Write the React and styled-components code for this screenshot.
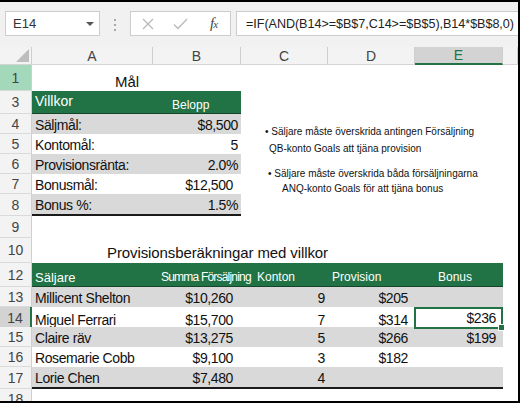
import React from 'react';
import styled, { createGlobalStyle } from 'styled-components';

const GREEN = '#217346';
const BAND = '#d9d9d9';
const COLS = '32px 121px 88px 87px 87px 88px 1fr';

const Global = createGlobalStyle`
  html, body { margin: 0; padding: 0; background: #fff; }
  body { font-family: "Liberation Sans", Arial, sans-serif; }
`;

const Frame = styled.div`
  width: 520px;
  height: 403px;
  box-sizing: border-box;
  border-top: 2px solid #000;
  border-right: 2px solid #000;
  border-bottom: 2px solid #000;
  background: #fff;
  overflow: hidden;
  display: flex;
  flex-direction: column;
`;

const FormulaBar = styled.div`
  height: 45px;
  flex: none;
  background: #f1f1f1;
  display: flex;
  align-items: flex-start;
  padding: 9px 0 0 5px;
  box-sizing: border-box;
`;

const NameBox = styled.div`
  width: 95px;
  height: 25px;
  flex: none;
  box-sizing: border-box;
  border: 1px solid #cdcdcd;
  background: #fff;
  display: flex;
  align-items: center;
  justify-content: space-between;
  padding: 0 5px 0 7px;
  font-size: 13px;
  color: #333;
`;

const Caret = styled.span`
  width: 0;
  height: 0;
  border-left: 4px solid transparent;
  border-right: 4px solid transparent;
  border-top: 4px solid #555;
`;

const Grip = styled.div`
  width: 2px;
  margin: 8px 14px 0 14px;
  display: flex;
  flex-direction: column;
  gap: 3px;
  & > i {
    display: block;
    width: 2px;
    height: 2px;
    background: #a8a8a8;
  }
`;

const ButtonBox = styled.div`
  width: 101px;
  height: 25px;
  flex: none;
  box-sizing: border-box;
  border: 1px solid #cdcdcd;
  background: #fff;
  display: flex;
  align-items: center;
`;

const ToolButton = styled.span`
  width: 34px;
  height: 23px;
  display: flex;
  align-items: center;
  justify-content: center;
  color: ${p => (p.$dim ? '#b8b8b8' : '#444')};
`;

const Fx = styled.span`
  font-family: "Liberation Serif", "Times New Roman", serif;
  font-style: italic;
  font-size: 15px;
  color: #444;
  letter-spacing: -1px;
  & > small {
    font-size: 11px;
  }
`;

const FormulaInput = styled.div`
  flex: 1;
  margin-left: 5px;
  margin-right: -10px;
  height: 25px;
  box-sizing: border-box;
  border: 1px solid #cdcdcd;
  background: #fff;
  display: flex;
  align-items: center;
  padding-left: 9px;
  font-size: 12.6px;
  letter-spacing: -0.05px;
  color: #222;
  white-space: nowrap;
  overflow: hidden;
`;

const Sheet = styled.div`
  position: relative;
  flex: 1;
  overflow: hidden;
`;

const HeaderRow = styled.div`
  display: grid;
  grid-template-columns: ${COLS};
  height: 18px;
  background: #f3f3f3;
`;

const Corner = styled.div`
  position: relative;
  box-sizing: border-box;
  border-right: 1px solid #cfcfcf;
  border-bottom: 1px solid #d4d4d4;
  display: flex;
  align-items: flex-end;
  justify-content: flex-end;
  padding: 0 2px 2px 0;
`;

const CornerMark = styled.span`
  width: 0;
  height: 0;
  border-left: 13px solid transparent;
  border-bottom: 13px solid #bdbdbd;
`;

const ColHead = styled.div`
  box-sizing: border-box;
  display: flex;
  align-items: center;
  justify-content: center;
  font-size: 14px;
  color: ${p => (p.$active ? GREEN : '#444')};
  background: ${p => (p.$active ? '#d3d3d3' : 'transparent')};
  border-right: 1px solid #cfcfcf;
  border-bottom: ${p => (p.$active ? `2px solid ${GREEN}` : '1px solid #d4d4d4')};
`;

const Row = styled.div`
  display: grid;
  grid-template-columns: ${COLS};
  height: ${p => p.$h}px;
`;

const RowHead = styled.div`
  box-sizing: border-box;
  display: flex;
  align-items: center;
  justify-content: center;
  font-size: 14px;
  color: #444;
  background: ${p => (p.$state === 'mark' ? '#a3d8bb' : p.$state === 'sel' ? '#d3d3d3' : '#f3f3f3')};
  border-bottom: 1px solid #dadada;
  border-right: ${p => (p.$state === 'sel' ? `2px solid ${GREEN}` : '1px solid #cfcfcf')};
`;

const Cell = styled.div`
  box-sizing: border-box;
  min-width: 0;
  display: flex;
  align-items: flex-end;
  justify-content: ${p => (p.$right ? 'flex-end' : 'flex-start')};
  grid-column: span ${p => p.$span || 1};
  white-space: nowrap;
  font-size: 14px;
  letter-spacing: -0.4px;
  line-height: 18px;
  color: #111;
  background: ${p => (p.$band ? BAND : 'transparent')};
  padding: 0 ${p => p.$pr || 0}px ${p => p.$pb || 0}px ${p => p.$pl || 0}px;
  border-bottom: ${p => (p.$rule ? '2px solid #1b1b1b' : 'none')};
`;

const Title = styled(Cell)`
  font-size: 15px;
  letter-spacing: -0.1px;
  overflow: visible;
`;

const HeadCell = styled(Cell)`
  position: relative;
  z-index: ${p => (p.$tight ? 1 : 0)};
  background: ${GREEN};
  color: #fff;
  font-size: ${p => p.$size || 12}px;
  letter-spacing: ${p => (p.$tight ? '-0.8px' : '0')};
  line-height: 16px;
  border-bottom: 1px solid #17452b;
`;

const SelCell = styled(Cell)`
  position: relative;
  border: 2px solid ${GREEN};
  padding-right: 5px;
  margin-left: -1px;
`;

const Handle = styled.span`
  position: absolute;
  right: -4px;
  bottom: -4px;
  width: 5px;
  height: 5px;
  background: ${GREEN};
  border: 1px solid #fff;
`;

const Notes = styled.div`
  position: absolute;
  left: 265px;
  top: 76px;
  font-size: 10px;
  color: #111;
`;

const NoteLine = styled.div`
  line-height: 17px;
  white-space: nowrap;
  margin-left: ${p => p.$indent || 0}px;
  margin-top: ${p => p.$mt || 0}px;
`;

const XIcon = () => (
  <svg width="12" height="12" viewBox="0 0 12 12">
    <path d="M1 1 L11 11 M11 1 L1 11" stroke="currentColor" strokeWidth="1.3" fill="none" />
  </svg>
);

const CheckIcon = () => (
  <svg width="15" height="12" viewBox="0 0 15 12">
    <path d="M1 6.5 L5 10.5 L14 1" stroke="currentColor" strokeWidth="1.3" fill="none" />
  </svg>
);

const goals = [
  { label: 'Säljmål:', value: '$8,500', pr: 3 },
  { label: 'Kontomål:', value: '5', pr: 3 },
  { label: 'Provisionsränta:', value: '2.0%', pr: 3 },
  { label: 'Bonusmål:', value: '$12,500', pr: 8 },
  { label: 'Bonus %:', value: '1.5%', pr: 3 },
];

const sales = [
  { name: 'Millicent Shelton', sum: '$10,260', acc: '9', prov: '$205', bonus: '' },
  { name: 'Miguel Ferrari', sum: '$15,700', acc: '7', prov: '$314', bonus: '$236' },
  { name: 'Claire räv', sum: '$13,275', acc: '5', prov: '$266', bonus: '$199' },
  { name: 'Rosemarie Cobb', sum: '$9,100', acc: '3', prov: '$182', bonus: '' },
  { name: 'Lorie Chen', sum: '$7,480', acc: '4', prov: '', bonus: '' },
];

export default function App() {
  return (
    <>
      <Global />
      <Frame>
        <FormulaBar>
          <NameBox>
            <span>E14</span>
            <Caret />
          </NameBox>
          <Grip>
            <i />
            <i />
            <i />
          </Grip>
          <ButtonBox>
            <ToolButton $dim>
              <XIcon />
            </ToolButton>
            <ToolButton $dim>
              <CheckIcon />
            </ToolButton>
            <ToolButton>
              <Fx>
                f<small>x</small>
              </Fx>
            </ToolButton>
          </ButtonBox>
          <FormulaInput>=IF(AND(B14&gt;=$B$7,C14&gt;=$B$5),B14*$B$8,0)</FormulaInput>
        </FormulaBar>

        <Sheet>
          <HeaderRow>
            <Corner>
              <CornerMark />
            </Corner>
            <ColHead>A</ColHead>
            <ColHead>B</ColHead>
            <ColHead>C</ColHead>
            <ColHead>D</ColHead>
            <ColHead $active>E</ColHead>
            <ColHead />
          </HeaderRow>

          <Row $h={26}>
            <RowHead $state="mark">1</RowHead>
            <Title $span={6} $pl={83} $pb={0}>Mål</Title>
          </Row>

          <Row $h={23}>
            <RowHead>3</RowHead>
            <HeadCell $size={14} $pl={3} $pb={4}>Villkor</HeadCell>
            <HeadCell $size={12} $pl={19} $pb={0}>Belopp</HeadCell>
          </Row>

          {goals.map((g, i) => {
            const band = i % 2 === 0;
            const last = i === goals.length - 1;
            return (
              <Row key={g.label} $h={last ? 22 : 20}>
                <RowHead>{i + 4}</RowHead>
                <Cell $band={band} $rule={last} $pl={3}>{g.label}</Cell>
                <Cell $band={band} $rule={last} $right $pr={g.pr}>{g.value}</Cell>
              </Row>
            );
          })}

          <Row $h={22}>
            <RowHead>9</RowHead>
          </Row>

          <Row $h={25}>
            <RowHead>10</RowHead>
            <Title $span={6} $pl={75} $pb={1}>Provisionsberäkningar med villkor</Title>
          </Row>

          <Row $h={24}>
            <RowHead>12</RowHead>
            <HeadCell $size={13} $pl={3} $pb={0}>Säljare</HeadCell>
            <HeadCell $pl={8} $pb={1} $tight>Summa Försäljning</HeadCell>
            <HeadCell $pl={16} $pb={1}>Konton</HeadCell>
            <HeadCell $pl={4} $pb={1}>Provision</HeadCell>
            <HeadCell $pl={23} $pb={1}>Bonus</HeadCell>
          </Row>

          {sales.map((s, i) => {
            const band = i % 2 === 0;
            const last = i === sales.length - 1;
            const selected = i === 1;
            return (
              <Row key={s.name} $h={last ? 22 : 20}>
                <RowHead $state={selected ? 'sel' : undefined}>{i + 13}</RowHead>
                <Cell $band={band} $rule={last} $pl={3}>{s.name}</Cell>
                <Cell $band={band} $rule={last} $right $pr={8}>{s.sum}</Cell>
                <Cell $band={band} $rule={last} $right $pr={3}>{s.acc}</Cell>
                <Cell $band={band} $rule={last} $right $pr={7}>{s.prov}</Cell>
                {selected ? (
                  <SelCell $right>
                    {s.bonus}
                    <Handle />
                  </SelCell>
                ) : (
                  <Cell $band={band} $rule={last} $right $pr={7}>{s.bonus}</Cell>
                )}
              </Row>
            );
          })}

          <Row $h={20}>
            <RowHead>18</RowHead>
          </Row>

          <Notes>
            <NoteLine>• Säljare måste överskrida antingen Försäljning</NoteLine>
            <NoteLine $indent={4}>QB-konto Goals att tjäna provision</NoteLine>
            <NoteLine $indent={3} $mt={8}>• Säljare måste överskrida båda försäljningarna</NoteLine>
            <NoteLine $indent={17} $mt={-2}>ANQ-konto Goals för att tjäna bonus</NoteLine>
          </Notes>
        </Sheet>
      </Frame>
    </>
  );
}
